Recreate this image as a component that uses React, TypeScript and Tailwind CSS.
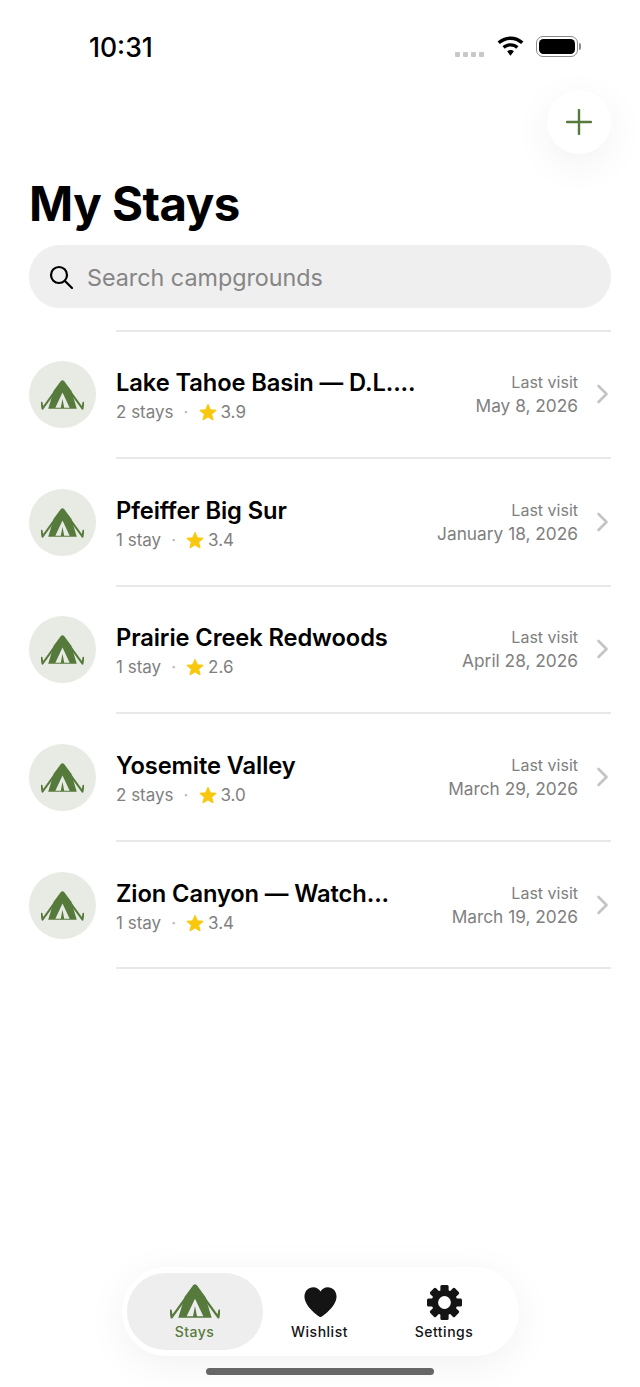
import React from 'react';

const stays = [
  { name: 'Lake Tahoe Basin — D.L....', count: '2 stays', rating: '3.9', date: 'May 8, 2026' },
  { name: 'Pfeiffer Big Sur', count: '1 stay', rating: '3.4', date: 'January 18, 2026' },
  { name: 'Prairie Creek Redwoods', count: '1 stay', rating: '2.6', date: 'April 28, 2026' },
  { name: 'Yosemite Valley', count: '2 stays', rating: '3.0', date: 'March 29, 2026' },
  { name: 'Zion Canyon — Watch...', count: '1 stay', rating: '3.4', date: 'March 19, 2026' },
];

const TentIcon: React.FC<{ className?: string }> = ({ className }) => (
  <svg viewBox="0 0 150 105" className={className} fill="#567a3c">
    <path
      fillRule="evenodd"
      d="M70 3 Q75 -2 80 3 L106 38 L125 101 L25 101 L44 38 Z M75 44 L50 97 L69 97 L75 66 L81 97 L100 97 Z"
    />
    <path
      d="M50 38 L5 100 L2 80 M100 38 L145 100 L148 80"
      stroke="#567a3c"
      strokeWidth="7"
      fill="none"
      strokeLinecap="round"
      strokeLinejoin="round"
    />
  </svg>
);

const GearIcon: React.FC<{ className?: string }> = ({ className }) => (
  <svg viewBox="0 0 34 34" className={className} fill="#141414">
    <circle cx="17" cy="17" r="12.5" />
    {[0, 45, 90, 135, 180, 225, 270, 315].map(a => (
      <rect key={a} x="13" y="0" width="8" height="8" rx="1.5" transform={`rotate(${a} 17 17)`} />
    ))}
    <circle cx="17" cy="17" r="6.2" fill="#fff" />
  </svg>
);

const StayRow: React.FC<{ stay: (typeof stays)[number] }> = ({ stay }) => (
  <div className="flex h-[127.6px] items-center pr-[29px] pl-[29px]">
    <div className="-mt-[1px] flex h-[67px] w-[67px] shrink-0 items-center justify-center rounded-full bg-[#e8ebe4]">
      <TentIcon className="mt-[1px] h-[30px] w-[43px]" />
    </div>
    <div className="ml-5 flex h-full min-w-0 flex-1 items-center border-b-2 border-[#e8e8e8] pt-[3px]">
      <div className="min-w-0 flex-1">
        <div className="pt-[1px] text-[23.7px] leading-[30px] font-semibold tracking-[-0.1px] whitespace-nowrap text-black">{stay.name}</div>
        <div className="mt-[2px] flex items-center text-[17px] leading-[24px] text-[#808080]">
          <span>{stay.count}</span>
          <span className="mx-[10px] text-[#b5b5b5]">·</span>
          <svg viewBox="0 0 24 24" className="mr-[4px] h-[18px] w-[18px]" fill="#f9c80e" stroke="#f9c80e" strokeWidth="1.5" strokeLinejoin="round">
            <path d="M12 2 L15 9 L22.6 9.7 L16.8 14.7 L18.6 22.2 L12 18.2 L5.4 22.2 L7.2 14.7 L1.4 9.7 L9 9 Z" />
          </svg>
          <span>{stay.rating}</span>
        </div>
      </div>
      <div className="mr-[18px] mb-[2px] text-right text-[#808080]">
        <div className="text-[16px] leading-[22px]">Last visit</div>
        <div className="text-[17.3px] leading-[25px]">{stay.date}</div>
      </div>
      <svg viewBox="0 0 13 20" className="mr-[2px] -mt-[3px] h-[20px] w-[13px]" fill="none" stroke="#c4c4c4" strokeWidth="2.6" strokeLinecap="round" strokeLinejoin="round">
        <path d="M2.5 2 L10.5 10 L2.5 18" />
      </svg>
    </div>
  </div>
);

const tabLabel = 'mt-[3px] text-[14px] leading-[18px] font-medium tracking-[0.5px]';

export default function App() {
  return (
    <div className="flex min-h-[1387px] flex-col bg-white font-['Inter',sans-serif]">
      <div className="flex h-[90px] shrink-0 items-start justify-between pt-[30px] pr-[59px] pl-[89px]">
        <span className="text-[26.5px] leading-[34px] font-medium text-black">10:31</span>
        <div className="mt-[6px] flex items-center">
          <div className="mt-[15px] flex gap-[3px]">
            <span className="h-[5px] w-[5px] rounded-[1px] bg-[#c8c8c8]" />
            <span className="h-[5px] w-[5px] rounded-[1px] bg-[#c8c8c8]" />
            <span className="h-[5px] w-[5px] rounded-[1px] bg-[#c8c8c8]" />
            <span className="h-[5px] w-[5px] rounded-[1px] bg-[#c8c8c8]" />
          </div>
          <svg viewBox="0 0 28 21" className="ml-[13px] h-[21px] w-[27px]" fill="#000">
            <path d="M14 0 C8.8 0 4.2 2 .6 5.3 L3 8 C6 5.3 9.8 3.7 14 3.7 C18.2 3.7 22 5.3 25 8 L27.4 5.3 C23.8 2 19.2 0 14 0 Z" />
            <path d="M14 7 C10.8 7 7.9 8.2 5.7 10.2 L8.1 12.8 C9.7 11.4 11.7 10.6 14 10.6 C16.3 10.6 18.3 11.4 19.9 12.8 L22.3 10.2 C20.1 8.2 17.2 7 14 7 Z" />
            <path d="M14 14 C12.6 14 11.4 14.5 10.5 15.4 L14 20 L17.5 15.4 C16.6 14.5 15.4 14 14 14 Z" />
          </svg>
          <div className="ml-[12px] flex items-center">
            <div className="h-[21px] w-[42px] rounded-[7px] border-[1.5px] border-[#8a8a8a] p-[2px]">
              <div className="h-full w-full rounded-[4.5px] bg-black" />
            </div>
            <div className="ml-[1px] h-[7px] w-[2px] rounded-r-[2px] bg-[#8a8a8a]" />
          </div>
        </div>
      </div>

      <div className="flex shrink-0 justify-end pr-[29px]">
        <button className="flex h-[64px] w-[64px] items-center justify-center rounded-full bg-white shadow-[0_10px_40px_rgba(0,0,0,0.06)]">
          <svg viewBox="0 0 26 26" className="h-[26px] w-[26px]" stroke="#567a3c" strokeWidth="2.4" strokeLinecap="round">
            <path d="M13 1 V25 M1 13 H25" />
          </svg>
        </button>
      </div>

      <h1 className="mt-[22px] pl-[29px] text-[47.4px] leading-[56px] font-bold tracking-[-0.5px] text-black">My Stays</h1>

      <div className="mx-[29px] mt-[13px] flex h-[63px] shrink-0 items-center rounded-[31px] bg-[#efefef] pl-[20px]">
        <svg viewBox="0 0 24 24" className="h-[24px] w-[24px]" fill="none" stroke="#000" strokeWidth="2.2" strokeLinecap="round">
          <circle cx="10" cy="10" r="8" />
          <path d="M16 16 L23 23" />
        </svg>
        <span className="mt-[4px] ml-[14px] text-[23.3px] text-[#858585]">Search campgrounds</span>
      </div>

      <div className="mt-[22px] mr-[29px] ml-[116px] h-[1.5px] bg-[#e8e8e8]" />
      <div>
        {stays.map(stay => (
          <StayRow key={stay.name} stay={stay} />
        ))}
      </div>

      <div className="flex-1" />

      <div className="flex flex-col items-center pb-[12px]">
        <div className="flex h-[89px] w-[397px] items-center rounded-[44px] bg-white pl-[5px] shadow-[0_8px_40px_rgba(0,0,0,0.06)]">
          <div className="flex h-[77px] w-[136px] flex-col items-center justify-center rounded-[38px] bg-[#eeeeee] pt-[2px]">
            <TentIcon className="h-[35px] w-[50px]" />
            <span className={`${tabLabel} mt-[4px] text-[#567a3c]`}>Stays</span>
          </div>
          <div className="flex w-[114px] flex-col items-center pt-[3px]">
            <svg viewBox="0 0 24 24" className="ml-[1px] h-[35px] w-[35px]" fill="#141414">
              <path d="M12 22 C11.5 22 1 15 1 7.8 C1 4 3.8 1.5 7 1.5 C9.2 1.5 11 2.6 12 4.5 C13 2.6 14.8 1.5 17 1.5 C20.2 1.5 23 4 23 7.8 C23 15 12.5 22 12 22 Z" />
            </svg>
            <span className={`${tabLabel} text-[#141414]`}>Wishlist</span>
          </div>
          <div className="flex w-[135px] flex-col items-center pt-[3px]">
            <GearIcon className="h-[35px] w-[35px]" />
            <span className={`${tabLabel} text-[#141414]`}>Settings</span>
          </div>
        </div>
        <div className="mt-[12px] h-[7px] w-[228px] rounded-full bg-[#666666]" />
      </div>
    </div>
  );
}
